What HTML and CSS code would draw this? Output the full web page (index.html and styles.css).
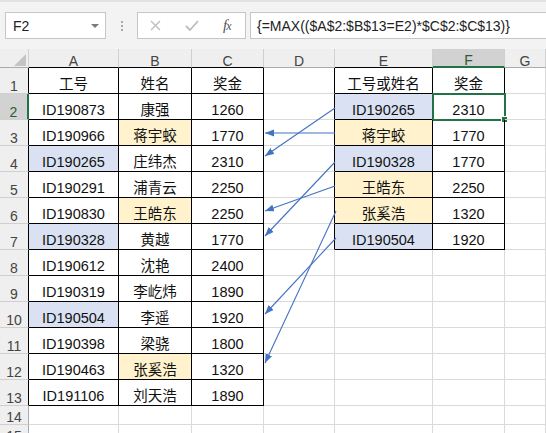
FILE: index.html
```html
<!DOCTYPE html>
<html>
<head>
<meta charset="utf-8">
<link rel="stylesheet" href="styles.css">
</head>
<body>
<div class="page">
  <div class="toolbar">
    <div class="namebox">F2<span class="dd"></span></div>
    <div class="grip"><i></i><i></i><i></i></div>
    <div class="fnbox">
      <svg class="ic-x" width="11" height="11" viewBox="0 0 11 11"><path d="M1 1L10 10M10 1L1 10" stroke="#bdbdbd" stroke-width="1.4" fill="none"/></svg>
      <svg class="ic-ok" width="14" height="11" viewBox="0 0 14 11"><path d="M1 6L5 10L13 1" stroke="#bdbdbd" stroke-width="1.8" fill="none"/></svg>
      <span class="ic-fx"><i>f</i><i class="sx">x</i></span>
    </div>
    <div class="formula">{=MAX(($A$2:$B$13=E2)*$C$2:$C$13)}</div>
  </div>
  <div class="sheet">
    <div class="corner"><svg width="29" height="19" viewBox="0 0 29 19"><path d="M14 17H26V5Z" fill="#c4c4c4"/></svg></div>
    <div class="h hb">A</div><div class="h hb">B</div><div class="h hb">C</div><div class="h">D</div><div class="h hb">E</div><div class="h hs">F</div><div class="h">G</div>

    <div class="r rt">1</div><div class="c t">工号</div><div class="c t">姓名</div><div class="c t">奖金</div><div class="c lb"></div><div class="c t">工号或姓名</div><div class="c t">奖金</div><div class="c"></div>

    <div class="r rs">2</div><div class="c t">ID190873</div><div class="c t">康强</div><div class="c t">1260</div><div class="c lb"></div><div class="c t b">ID190265</div><div class="c t sel">2310<span class="selbox"></span><span class="handle"></span></div><div class="c"></div>

    <div class="r rt">3</div><div class="c t">ID190966</div><div class="c t y">蒋宇蛟</div><div class="c t">1770</div><div class="c lb"></div><div class="c t y">蒋宇蛟</div><div class="c t">1770</div><div class="c"></div>

    <div class="r rt">4</div><div class="c t b">ID190265</div><div class="c t">庄纬杰</div><div class="c t">2310</div><div class="c lb"></div><div class="c t b">ID190328</div><div class="c t">1770</div><div class="c"></div>

    <div class="r rt">5</div><div class="c t">ID190291</div><div class="c t">浦青云</div><div class="c t">2250</div><div class="c lb"></div><div class="c t y">王皓东</div><div class="c t">2250</div><div class="c"></div>

    <div class="r rt">6</div><div class="c t">ID190830</div><div class="c t y">王皓东</div><div class="c t">2250</div><div class="c lb"></div><div class="c t y">张奚浩</div><div class="c t">1320</div><div class="c"></div>

    <div class="r rt">7</div><div class="c t b">ID190328</div><div class="c t">黄越</div><div class="c t">1770</div><div class="c lb"></div><div class="c t b">ID190504</div><div class="c t">1920</div><div class="c"></div>

    <div class="r rt">8</div><div class="c t">ID190612</div><div class="c t">沈艳</div><div class="c t">2400</div><div class="c"></div><div class="c"></div><div class="c"></div><div class="c"></div>

    <div class="r rt">9</div><div class="c t">ID190319</div><div class="c t">李屹炜</div><div class="c t">1890</div><div class="c"></div><div class="c"></div><div class="c"></div><div class="c"></div>

    <div class="r rt">10</div><div class="c t b">ID190504</div><div class="c t">李遥</div><div class="c t">1920</div><div class="c"></div><div class="c"></div><div class="c"></div><div class="c"></div>

    <div class="r rt">11</div><div class="c t">ID190398</div><div class="c t">梁骁</div><div class="c t">1800</div><div class="c"></div><div class="c"></div><div class="c"></div><div class="c"></div>

    <div class="r rt">12</div><div class="c t">ID190463</div><div class="c t y">张奚浩</div><div class="c t">1320</div><div class="c"></div><div class="c"></div><div class="c"></div><div class="c"></div>

    <div class="r rt">13</div><div class="c t">ID191106</div><div class="c t">刘天浩</div><div class="c t">1890</div><div class="c"></div><div class="c"></div><div class="c"></div><div class="c"></div>

    <div class="r">14</div><div class="c"></div><div class="c"></div><div class="c"></div><div class="c"></div><div class="c"></div><div class="c"></div><div class="c"></div>

    <div class="r">15</div><div class="c"></div><div class="c"></div><div class="c"></div><div class="c"></div><div class="c"></div><div class="c"></div><div class="c"></div>
  </div>
  <svg class="arrows" width="546" height="433" viewBox="0 0 546 433">
    <defs>
      <marker id="ah" markerUnits="userSpaceOnUse" markerWidth="10" markerHeight="8" refX="9" refY="3.5" orient="auto">
        <path d="M0 0L9 3.5L0 7Z" fill="#4472c4"/>
      </marker>
    </defs>
    <g stroke="#4472c4" stroke-width="1.1" fill="none" marker-end="url(#ah)">
      <line x1="335" y1="133" x2="265" y2="133"/>
      <line x1="335" y1="108" x2="265" y2="156"/>
      <line x1="335" y1="186" x2="265" y2="211"/>
      <line x1="335" y1="162" x2="265" y2="236"/>
      <line x1="336" y1="211" x2="265" y2="363"/>
      <line x1="336" y1="238" x2="265" y2="314"/>
    </g>
  </svg>
</div>
</body>
</html>
```
FILE: styles.css
```css
* { box-sizing: border-box; margin: 0; padding: 0; }
body {
  width: 546px;
  height: 433px;
  overflow: hidden;
  background: #fff;
  font-family: "Liberation Sans", "Noto Sans CJK SC", sans-serif;
}
.page { position: relative; width: 546px; height: 433px; overflow: hidden; }

.toolbar {
  height: 49px;
  background: #f3f3f3;
  border-top: 2px solid #e2e2e2;
  display: flex;
  align-items: flex-start;
  padding: 10px 0 0 5px;
}
.namebox {
  position: relative;
  width: 101px;
  height: 27px;
  background: #fff;
  border: 1px solid #c6c6c6;
  display: flex;
  align-items: center;
  padding-left: 7px;
  font-size: 14px;
  color: #222;
}
.dd {
  position: absolute;
  right: 6px;
  top: 11px;
  border-left: 4px solid transparent;
  border-right: 4px solid transparent;
  border-top: 4px solid #7a7a7a;
}
.grip {
  width: 31px;
  display: flex;
  flex-direction: column;
  align-items: center;
  gap: 2px;
  padding-top: 9px;
}
.grip i { display: block; width: 2px; height: 2px; background: #a8a8a8; }
.fnbox {
  width: 109px;
  height: 27px;
  background: #fff;
  border: 1px solid #c6c6c6;
  display: flex;
  align-items: center;
}
.ic-x { margin-left: 12px; }
.ic-ok { margin-left: 24px; }
.ic-fx {
  margin-left: 24px;
  font-family: "Liberation Serif", serif;
  font-size: 15px;
  color: #555;
  line-height: 1;
}
.ic-fx .sx { font-size: 12px; margin-left: -1px; }
.formula {
  flex: 1;
  margin-left: 4px;
  height: 27px;
  background: #fff;
  border: 1px solid #c6c6c6;
  border-right: none;
  padding-left: 6px;
  display: flex;
  align-items: center;
  font-size: 14px;
  color: #222;
  white-space: nowrap;
  overflow: hidden;
}

.sheet {
  display: grid;
  grid-template-columns: 29px 90px 73px 72px 71px 98px 72px 41px;
  grid-template-rows: 19px repeat(13, 26px) 19px 19px;
}
.corner {
  background: #efefef;
  border-right: 1px solid #d0d0d0;
  border-bottom: 1px solid #ababab;
}
.corner svg { display: block; }
.h {
  background: #efefef;
  border-right: 1px solid #d0d0d0;
  border-bottom: 1px solid #ababab;
  display: flex;
  align-items: flex-end;
  justify-content: center;
  font-size: 14px;
  line-height: 12px;
  color: #444;
}
.hb { border-bottom-color: #000; }
.hs {
  background: #d2d2d2;
  border-bottom: 2px solid #217346;
  color: #2c5a36;
}
.r {
  background: #efefef;
  border-right: 1px solid #ababab;
  border-bottom: 1px solid #d0d0d0;
  display: flex;
  align-items: flex-end;
  justify-content: center;
  font-size: 14px;
  line-height: 14px;
  color: #444;
}
.rt { border-right-color: #000; }
.rs {
  background: #d2d2d2;
  border-right: 2px solid #217346;
  color: #2c5a36;
}
.c {
  position: relative;
  border-right: 1px solid #dadada;
  border-bottom: 1px solid #dadada;
  display: flex;
  align-items: flex-end;
  justify-content: center;
  font-size: 14.5px;
  line-height: 18px;
  color: #111;
  white-space: nowrap;
}
.t { border-right-color: #000; border-bottom-color: #000; }
.lb { border-right-color: #000; }
.b { background: #d9e1f2; }
.y { background: #fff2cc; }
.selbox {
  position: absolute;
  left: -1px;
  top: -1px;
  width: 74px;
  height: 28px;
  border: 2px solid #217346;
}
.handle {
  position: absolute;
  left: 68px;
  top: 22px;
  width: 7px;
  height: 7px;
  background: #217346;
  border: 1px solid #fff;
}
.arrows { position: absolute; left: 0; top: 0; pointer-events: none; }
```
